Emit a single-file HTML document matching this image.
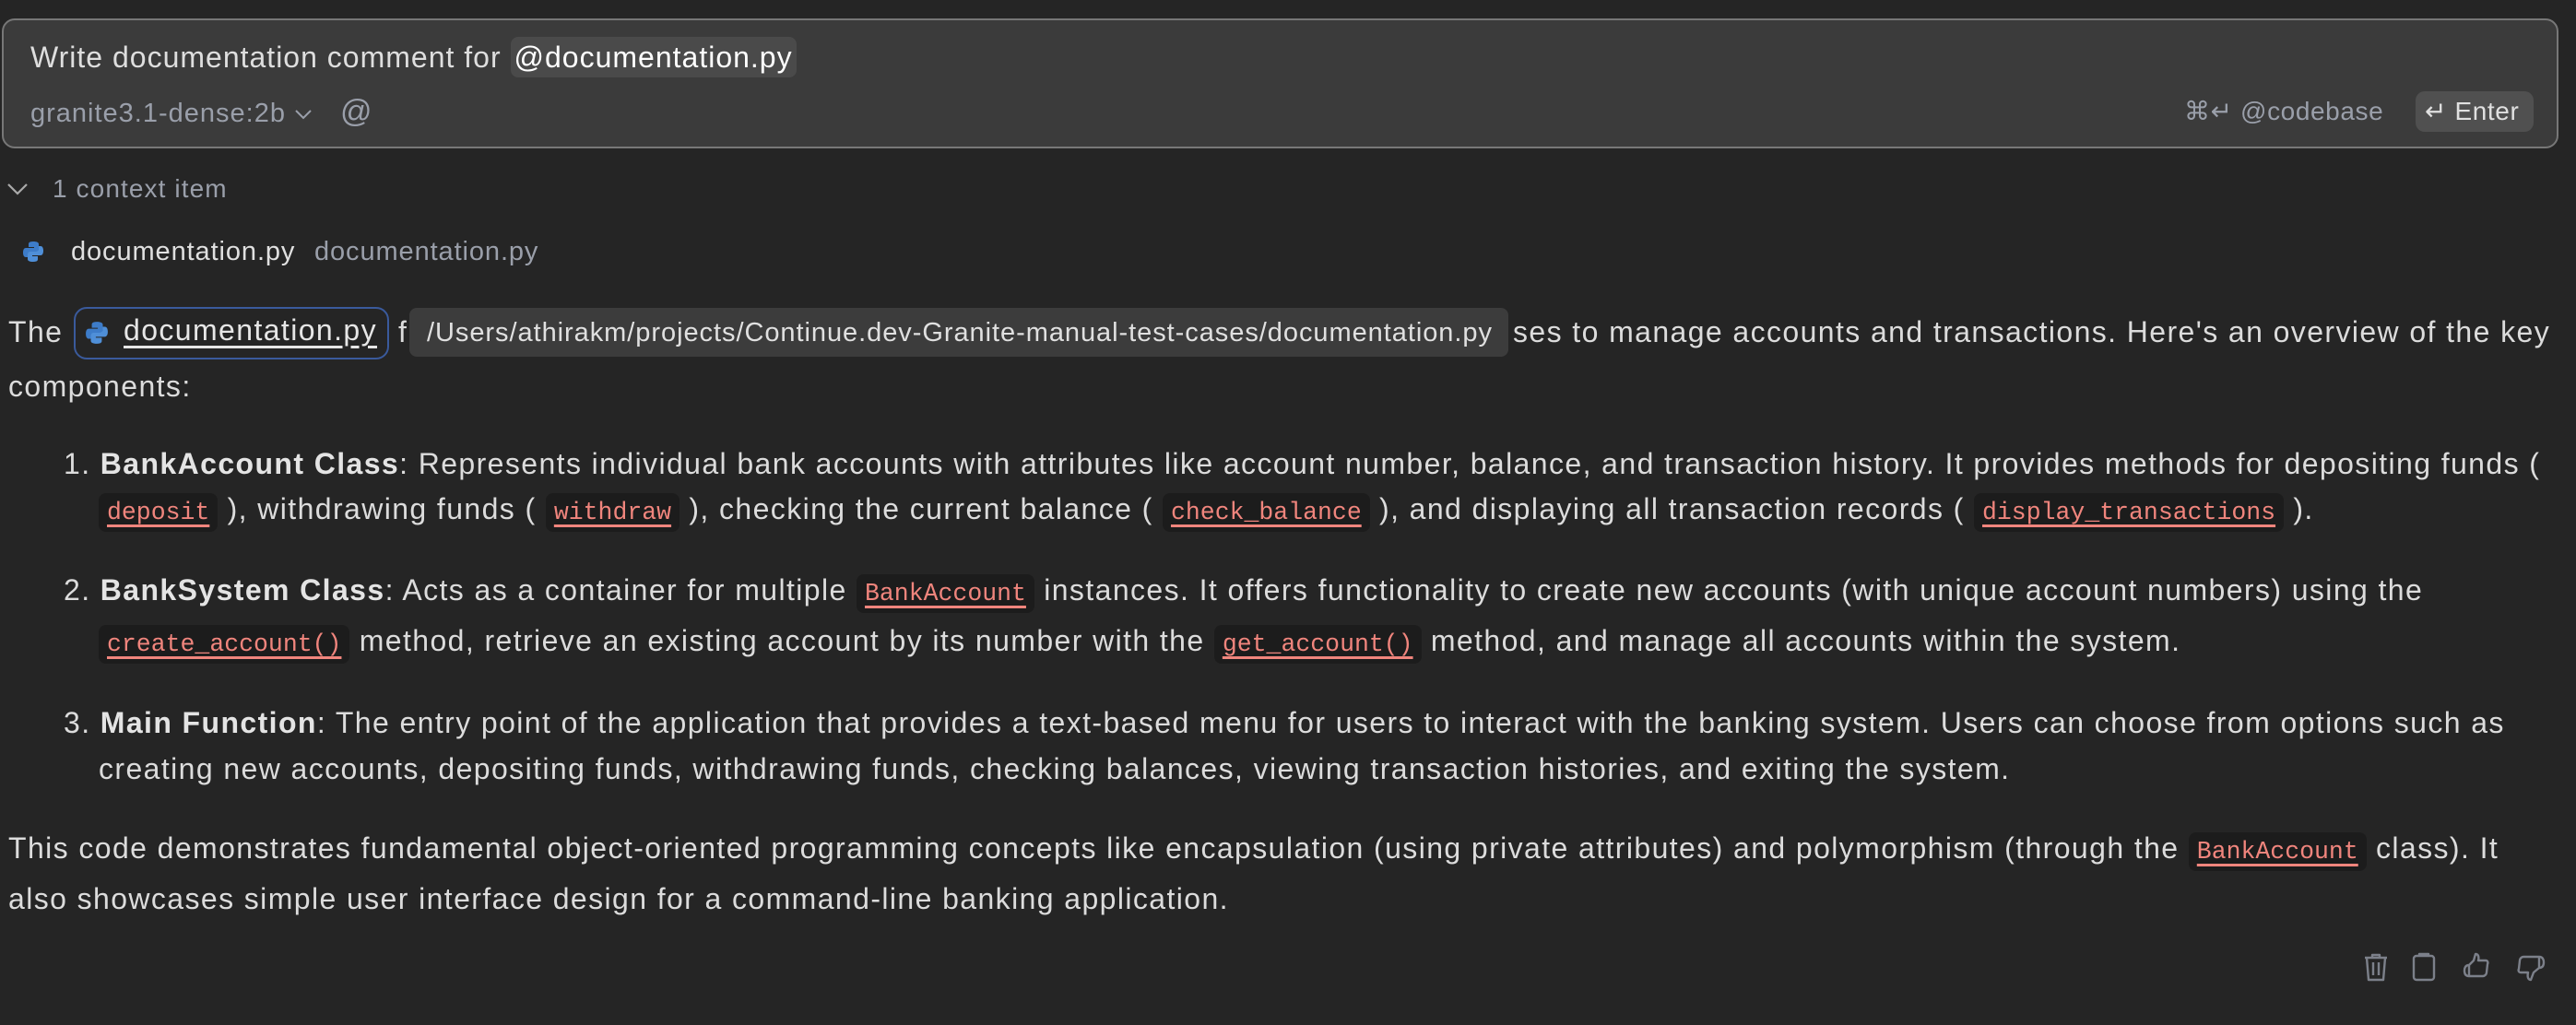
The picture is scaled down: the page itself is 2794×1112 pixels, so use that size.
<!DOCTYPE html>
<html><head><meta charset="utf-8"><style>
html,body{margin:0;padding:0;background:#252525;width:2794px;height:1112px;overflow:hidden;font-family:"Liberation Sans",Arial,sans-serif;color:#dcdcdc}
.abs{position:absolute;white-space:nowrap;line-height:40px}
.t{font-size:32px;letter-spacing:1.4px}
.c{font-family:"Liberation Mono",monospace;font-size:26.5px;letter-spacing:0;color:#f0857d;background:#1c1c1c;border-radius:8px;padding:6px 9px;text-decoration:underline;text-decoration-thickness:3px;text-underline-offset:6px}
b{color:#e4e4e4}
.box{position:absolute;left:2px;top:20px;width:2773px;height:141px;border:2px solid #777;border-radius:14px;background:#3b3b3b;box-sizing:border-box}
.grey{color:#9a9faa}
</style></head><body>
<div class="box"></div>
<div class="abs" style="left:33px;top:42px;color:#dedede;font-size:32px;letter-spacing:1.0px">Write documentation comment for <span style="background:#4a4a4a;border-radius:8px;padding:4px 4px;color:#fff">@documentation.py</span></div>
<div class="abs grey" style="left:33px;top:101px;font-size:29px;letter-spacing:1.0px">granite3.1-dense:2b <svg width="20" height="14" viewBox="0 0 20 14" style="vertical-align:middle"><path d="M2 3 L10 11 L18 3" stroke="#9a9faa" stroke-width="2" fill="none"/></svg><span style="margin-left:30px;font-size:34px">@</span></div>
<div class="abs grey" style="left:2369px;top:101px;font-size:28px;letter-spacing:0.6px">⌘↵ @codebase</div>
<div style="position:absolute;left:2620px;top:99px;width:128px;height:44px;background:#505050;border-radius:10px"></div>
<div class="abs" style="left:2630px;top:101px;font-size:28px;letter-spacing:0.6px;color:#e0e0e0">↵ Enter</div>

<svg style="position:absolute;left:6px;top:196px" width="26" height="18" viewBox="0 0 26 18"><path d="M3 4 L13 14 L23 4" stroke="#aaa" stroke-width="2.2" fill="none"/></svg>
<div class="abs grey" style="left:57px;top:185px;font-size:28px;letter-spacing:1.1px">1 context item</div>

<svg style="position:absolute;left:24px;top:261px" width="24" height="24" viewBox="0 0 24 24"><path d="M12 1c-5 0-5 2-5 3v3h6v1H4c-2 0-3 2-3 5s1 5 3 5h2v-3c0-2 2-3 4-3h5c2 0 3-1 3-3V4c0-2-2-3-6-3z" fill="#3d7cc9"/><path d="M12 23c5 0 5-2 5-3v-3h-6v-1h9c2 0 3-2 3-5s-1-5-3-5h-2v3c0 2-2 3-4 3H9c-2 0-3 1-3 3v5c0 2 2 3 6 3z" fill="#4f8fd8"/></svg>
<div class="abs" style="left:77px;top:253px;font-size:29px;letter-spacing:0.9px;color:#e0e0e0">documentation.py</div>
<div class="abs grey" style="left:341px;top:253px;font-size:29px;letter-spacing:0.9px">documentation.py</div>

<div class="abs t" style="left:9px;top:340px">The</div>
<div style="position:absolute;left:80px;top:333px;width:342px;height:57px;border:2px solid #3a5a9c;border-radius:14px;box-sizing:border-box"></div>
<svg style="position:absolute;left:92px;top:348px" width="26" height="26" viewBox="0 0 24 24"><path d="M12 1c-5 0-5 2-5 3v3h6v1H4c-2 0-3 2-3 5s1 5 3 5h2v-3c0-2 2-3 4-3h5c2 0 3-1 3-3V4c0-2-2-3-6-3z" fill="#3d7cc9"/><path d="M12 23c5 0 5-2 5-3v-3h-6v-1h9c2 0 3-2 3-5s-1-5-3-5h-2v3c0 2-2 3-4 3H9c-2 0-3 1-3 3v5c0 2 2 3 6 3z" fill="#4f8fd8"/></svg>
<div class="abs t" style="left:134px;top:338px;text-decoration:underline;text-underline-offset:6px;color:#e6e6e6">documentation.py</div>
<div class="abs t" style="left:432px;top:340px">f</div>
<div style="position:absolute;left:444px;top:334px;width:1192px;height:53px;background:#3c3c3c;border-radius:8px"></div>
<div class="abs" style="left:463px;top:341px;font-size:29px;letter-spacing:0.95px;color:#e0e0e0">/Users/athirakm/projects/Continue.dev-Granite-manual-test-cases/documentation.py</div>
<div class="abs t" style="left:1641px;top:340px">ses to manage accounts and transactions. Here's an overview of the key</div>
<div class="abs t" style="left:9px;top:399px">components:</div>

<div class="abs t" style="left:69px;top:483px">1. <b>BankAccount Class</b>: Represents individual bank accounts with attributes like account number, balance, and transaction history. It provides methods for depositing funds (</div>
<div class="abs t" style="left:107px;top:532px"><span class="c">deposit</span> ), withdrawing funds ( <span class="c">withdraw</span> ), checking the current balance ( <span class="c">check_balance</span> ), and displaying all transaction records ( <span class="c">display_transactions</span> ).</div>

<div class="abs t" style="left:69px;top:620px">2. <b>BankSystem Class</b>: Acts as a container for multiple <span class="c">BankAccount</span> instances. It offers functionality to create new accounts (with unique account numbers) using the</div>
<div class="abs t" style="left:107px;top:675px"><span class="c">create_account()</span> method, retrieve an existing account by its number with the <span class="c">get_account()</span> method, and manage all accounts within the system.</div>

<div class="abs t" style="left:69px;top:764px">3. <b>Main Function</b>: The entry point of the application that provides a text-based menu for users to interact with the banking system. Users can choose from options such as</div>
<div class="abs t" style="left:107px;top:814px">creating new accounts, depositing funds, withdrawing funds, checking balances, viewing transaction histories, and exiting the system.</div>

<div class="abs t" style="left:9px;top:900px">This code demonstrates fundamental object-oriented programming concepts like encapsulation (using private attributes) and polymorphism (through the <span class="c">BankAccount</span> class). It</div>
<div class="abs t" style="left:9px;top:955px">also showcases simple user interface design for a command-line banking application.</div>

<svg style="position:absolute;left:2562px;top:1033px" width="30" height="32" viewBox="0 0 30 32" fill="none" stroke="#7c808a" stroke-width="2.4" stroke-linejoin="round"><path d="M3 6h24M11 6V3h8v3M5 6l2 24h16l2-24M12 11v14M18 11v14"/></svg>
<svg style="position:absolute;left:2616px;top:1033px" width="26" height="32" viewBox="0 0 26 32" fill="none" stroke="#7c808a" stroke-width="2.4" stroke-linejoin="round"><rect x="2" y="4" width="22" height="26" rx="3"/><path d="M8 4V2h10v2"/></svg>
<svg style="position:absolute;left:2670px;top:1033px" width="32" height="30" viewBox="0 0 32 30" fill="none" stroke="#7c808a" stroke-width="2.4" stroke-linejoin="round"><path d="M8 14c-4 0-5 3-5 6s1 6 5 6M8 14v12M8 14l5-5 2-7c3 0 4 3 3 7h8c2 0 3 2 2 4l-1 9c0 2-2 4-4 4H8"/></svg>
<svg style="position:absolute;left:2728px;top:1034px" width="34" height="32" viewBox="0 0 34 32" fill="none" stroke="#7c808a" stroke-width="2.4" stroke-linejoin="round"><path d="M26 16c4 0 5-3 5-6s-1-6-5-6M26 16V4M26 16l-6 5-3 8c-3 0-4-3-3-8H6c-2 0-3-2-2-4l1-9c0-2 2-4 4-4h17"/></svg>
</body></html>
